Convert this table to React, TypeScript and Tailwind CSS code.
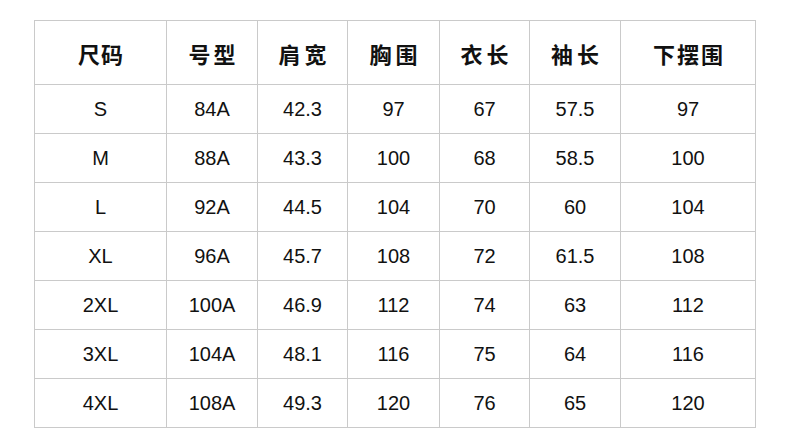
import React from 'react';

const headers = [
  { t: '尺码', c: 'tracking-[1px] pl-[1px]' },
  { t: '号型', c: 'tracking-[3px] pl-[3px]' },
  { t: '肩宽', c: 'tracking-[4px] pl-[4px]' },
  { t: '胸围', c: 'tracking-[4px] pl-[4px]' },
  { t: '衣长', c: 'tracking-[4px] pl-[4px]' },
  { t: '袖长', c: 'tracking-[4px] pl-[4px]' },
  { t: '下摆围', c: 'tracking-[2px] pl-[2px]' },
];

const rows: string[][] = [
  ['S', '84A', '42.3', '97', '67', '57.5', '97'],
  ['M', '88A', '43.3', '100', '68', '58.5', '100'],
  ['L', '92A', '44.5', '104', '70', '60', '104'],
  ['XL', '96A', '45.7', '108', '72', '61.5', '108'],
  ['2XL', '100A', '46.9', '112', '74', '63', '112'],
  ['3XL', '104A', '48.1', '116', '75', '64', '116'],
  ['4XL', '108A', '49.3', '120', '76', '65', '120'],
];

const App: React.FC = () => {
  return (
    <div className="w-[790px] h-[428px] bg-white overflow-hidden pt-[20px] pl-[34px]">
      <div className="grid grid-cols-[132px_91px_90px_92px_90px_91px_135px] w-max border-l border-t border-[#cacaca] text-[#111]">
        {headers.map((h) => (
          <div
            key={h.t}
            className={`h-[64px] flex items-center justify-center border-r border-b border-[#cacaca] text-[22px] font-bold pt-[2px] ${h.c}`}
            style={{ fontFamily: '"Noto Sans CJK SC", sans-serif' }}
          >
            {h.t}
          </div>
        ))}
        {rows.map((r, i) =>
          r.map((v, j) => (
            <div
              key={`${i}-${j}`}
              className="h-[49px] flex items-center justify-center border-r border-b border-[#cacaca] text-[20px]"
              style={{ fontFamily: '"Liberation Sans", Arial, sans-serif' }}
            >
              {v}
            </div>
          ))
        )}
      </div>
    </div>
  );
};

export default App;
